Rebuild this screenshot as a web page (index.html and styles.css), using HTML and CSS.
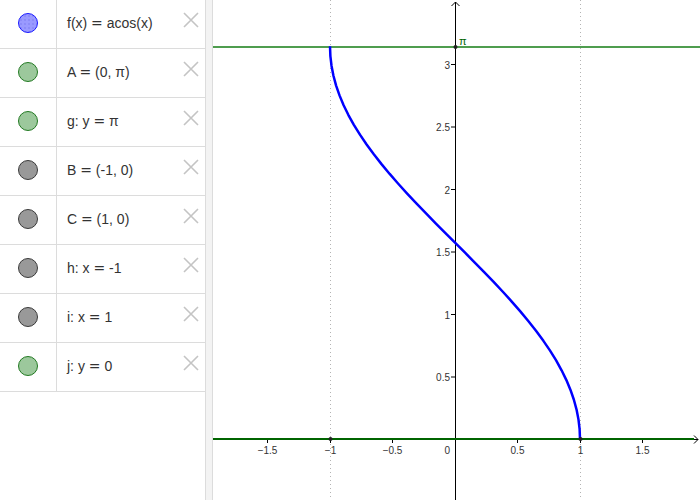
FILE: index.html
```html
<!DOCTYPE html>
<html lang="en">
<head>
    <meta charset="UTF-8">
    <meta name="viewport" content="width=device-width, initial-scale=1.0">
    <title>acos(x)</title>
    <link rel="stylesheet" href="styles.css">
</head>
<body>
    <div class="algebra">
        <div class="item">
            <div class="marble-cell"><span class="marble blue"></span></div>
            <div class="formula">f(x) <span class="eq">=</span> acos(x)</div>
            <svg class="delete" viewBox="0 0 16 16"><path d="M1 1 L15 15 M15 1 L1 15"/></svg>
        </div>
        <div class="item">
            <div class="marble-cell"><span class="marble green"></span></div>
            <div class="formula">A <span class="eq">=</span> (0, π)</div>
            <svg class="delete" viewBox="0 0 16 16"><path d="M1 1 L15 15 M15 1 L1 15"/></svg>
        </div>
        <div class="item">
            <div class="marble-cell"><span class="marble green"></span></div>
            <div class="formula">g: y <span class="eq">=</span> π</div>
            <svg class="delete" viewBox="0 0 16 16"><path d="M1 1 L15 15 M15 1 L1 15"/></svg>
        </div>
        <div class="item">
            <div class="marble-cell"><span class="marble gray"></span></div>
            <div class="formula">B <span class="eq">=</span> (-1, 0)</div>
            <svg class="delete" viewBox="0 0 16 16"><path d="M1 1 L15 15 M15 1 L1 15"/></svg>
        </div>
        <div class="item">
            <div class="marble-cell"><span class="marble gray"></span></div>
            <div class="formula">C <span class="eq">=</span> (1, 0)</div>
            <svg class="delete" viewBox="0 0 16 16"><path d="M1 1 L15 15 M15 1 L1 15"/></svg>
        </div>
        <div class="item">
            <div class="marble-cell"><span class="marble gray"></span></div>
            <div class="formula">h: x <span class="eq">=</span> -1</div>
            <svg class="delete" viewBox="0 0 16 16"><path d="M1 1 L15 15 M15 1 L1 15"/></svg>
        </div>
        <div class="item">
            <div class="marble-cell"><span class="marble gray"></span></div>
            <div class="formula">i: x <span class="eq">=</span> 1</div>
            <svg class="delete" viewBox="0 0 16 16"><path d="M1 1 L15 15 M15 1 L1 15"/></svg>
        </div>
        <div class="item">
            <div class="marble-cell"><span class="marble green"></span></div>
            <div class="formula">j: y <span class="eq">=</span> 0</div>
            <svg class="delete" viewBox="0 0 16 16"><path d="M1 1 L15 15 M15 1 L1 15"/></svg>
        </div>
    </div>

    <div class="splitter"></div>

    <div class="graphics">
        <!-- origin at (242, 439), 125px per unit -->
        <svg width="487" height="500" viewBox="0 0 487 500">
            <!-- h: x = -1, i: x = 1 -->
            <line class="dotted" x1="117.5" y1="0" x2="117.5" y2="500"/>
            <line class="dotted" x1="367.5" y1="0" x2="367.5" y2="500"/>

            <!-- axes -->
            <line class="axis" x1="242.5" y1="2" x2="242.5" y2="500"/>
            <path class="axis" d="M238.5 6 L242.5 2 L246.5 6"/>
            <line class="axis" x1="0" y1="439.5" x2="485" y2="439.5"/>
            <path class="axis" d="M481 435.5 L485 439.5 L481 443.5"/>

            <g class="axis">
                <path d="M54.5 439 V443 M117.5 439 V443 M179.5 439 V443 M304.5 439 V443 M367.5 439 V443 M429.5 439 V443"/>
                <path d="M238 64.5 H242 M238 127 H242 M238 189.5 H242 M238 252 H242 M238 314.5 H242 M238 377 H242"/>
            </g>

            <g class="tick-x">
                <text x="54.5" y="454">−1.5</text>
                <text x="117.5" y="454">−1</text>
                <text x="179.5" y="454">−0.5</text>
                <text x="304.5" y="454">0.5</text>
                <text x="367.5" y="454">1</text>
                <text x="429.5" y="454">1.5</text>
            </g>
            <g class="tick-y">
                <text x="237" y="454">0</text>
                <text x="237" y="68.5">3</text>
                <text x="237" y="131">2.5</text>
                <text x="237" y="193.5">2</text>
                <text x="237" y="256">1.5</text>
                <text x="237" y="318.5">1</text>
                <text x="237" y="381">0.5</text>
            </g>

            <!-- g: y = pi, j: y = 0 -->
            <line class="line-g" x1="0" y1="47" x2="487" y2="47"/>
            <line class="line-j" x1="0" y1="439" x2="481" y2="439"/>
            <text class="pi-label" x="246" y="45">π</text>

            <!-- f(x) = acos(x), sampled every 4.5 degrees -->
            <polyline class="curve" points="367,439 366.62,429.18 365.46,419.37 363.55,409.55 360.88,399.73 357.49,389.91 353.38,380.1 348.58,370.28 343.13,360.46 337.05,350.64 330.39,340.83 323.18,331.01 315.47,321.19 307.31,311.37 298.75,301.56 289.84,291.74 280.63,281.92 271.18,272.11 261.55,262.29 251.81,252.47 242,242.65 232.19,232.84 222.45,223.02 212.82,213.2 203.37,203.38 194.16,193.56 185.25,183.75 176.69,173.93 168.53,164.11 160.82,154.29 153.61,144.48 146.95,134.66 140.87,124.84 135.42,115.02 130.62,105.21 126.51,95.39 123.12,85.57 120.45,75.76 118.54,65.94 117.38,56.12 117,46.3"/>

            <!-- points A, B, C -->
            <circle class="pt" cx="242.5" cy="47" r="2"/>
            <circle class="pt" cx="117.5" cy="439" r="2"/>
            <circle class="pt" cx="367.5" cy="439" r="2"/>
        </svg>
    </div>
</body>
</html>
```

FILE: styles.css
```css
body {
    margin: 0;
    padding: 0;
    display: flex;
    height: 500px;
    overflow: hidden;
    background: #ffffff;
    font-family: 'Liberation Sans', Arial, sans-serif;
    color: #333;
}

.algebra {
    width: 205px;
    flex-shrink: 0;
    border-right: 1px solid #dcdcdc;
    background: #ffffff;
}

.item {
    display: flex;
    height: 48px;
    border-bottom: 1px solid #dcdcdc;
}

.marble-cell {
    width: 56px;
    border-right: 1px solid #dcdcdc;
    display: flex;
    align-items: center;
    justify-content: center;
}

.marble {
    width: 18px;
    height: 18px;
    border-radius: 50%;
    border: 1px solid #444;
    margin-top: -2px;
}

.marble.blue {
    background-color: #9a9aff;
    background-image: radial-gradient(#7b7bf0 0.6px, transparent 0.8px);
    background-size: 4px 4px;
    border-color: #1a1aff;
}

.marble.green {
    background: #9cc89c;
    border-color: #237a23;
}

.marble.gray {
    background: #999999;
    border-color: #3a3a3a;
}

.formula {
    flex: 1;
    display: flex;
    align-items: center;
    padding-left: 10px;
    font-size: 14px;
    color: #333;
    white-space: pre;
    margin-top: -2px;
}

.eq {
    font-family: 'DejaVu Sans', sans-serif;
}

.delete {
    width: 16px;
    height: 16px;
    margin: 12px 6px 0 0;
    flex-shrink: 0;
}

.delete path {
    stroke: #c4c4c4;
    stroke-width: 1.6;
    fill: none;
}

.splitter {
    width: 6px;
    flex-shrink: 0;
    background: #f3f3f3;
    border-right: 1px solid #dcdcdc;
}

.graphics {
    flex: 1;
    background: #ffffff;
}

.graphics svg {
    display: block;
}

.dotted {
    stroke: #b4b4b4;
    stroke-width: 1;
    stroke-dasharray: 1 3;
}

.axis {
    stroke: #000;
    stroke-width: 1;
    fill: none;
}

.tick-x text,
.tick-y text {
    font-family: 'Liberation Sans', Arial, sans-serif;
    font-size: 10px;
    fill: #333;
}

.tick-x text {
    text-anchor: middle;
}

.tick-y text {
    text-anchor: end;
}

.line-g {
    stroke: #4f9d4f;
    stroke-width: 2;
}

.line-j {
    stroke: #006400;
    stroke-width: 2;
}

.pi-label {
    font-family: 'Liberation Sans', Arial, sans-serif;
    font-size: 11px;
    fill: #006400;
}

.curve {
    stroke: #0000ff;
    stroke-width: 2.5;
    fill: none;
    stroke-linejoin: round;
}

.pt {
    fill: #222;
}
```
